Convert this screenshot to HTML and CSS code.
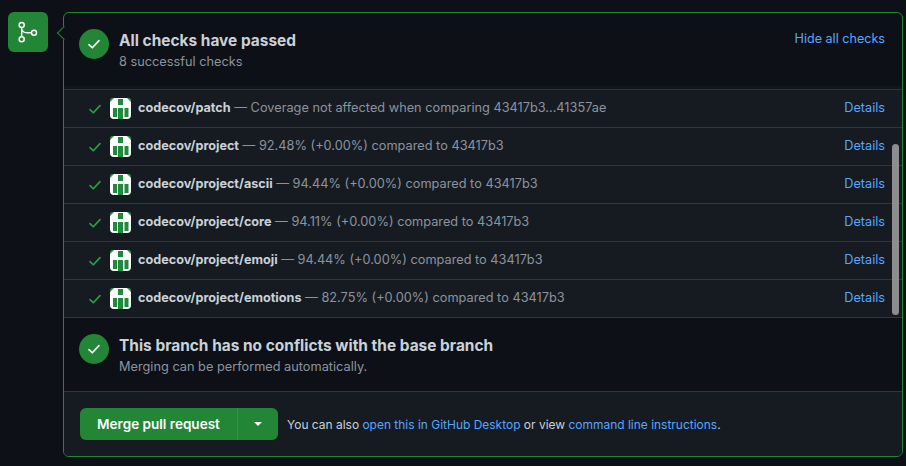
FILE: index.html
```html
<!DOCTYPE html>
<html lang="en">
<head>
<meta charset="utf-8">
<title>Merge checks</title>
<link rel="stylesheet" href="styles.css">
</head>
<body>
<svg class="defs" width="0" height="0" aria-hidden="true">
  <symbol id="check" viewBox="0 0 16 16"><path d="M3 8.6 6.3 11.8 13 4.6" fill="none" stroke="currentColor" stroke-width="1.6" stroke-linecap="round" stroke-linejoin="round"/></symbol>
  <symbol id="codecov" viewBox="0 0 21 21">
    <rect width="21" height="21" rx="4" fill="#fff"/>
    <path d="M0 4V3a3 3 0 0 1 3-3h1zM21 4V3a3 3 0 0 0-3-3h-1z" fill="#1f8a3b"/>
    <path d="M8 1h5v6H8zM3 10h4v9H3zM8 10h5v11H8zM14.500 10h4v9h-4z" fill="#1f8a3b"/>
  </symbol>
</svg>
<main class="page">
  <div class="tile">
    <svg width="24" height="24" viewBox="0 0 24 24" fill="none" stroke="#fff" stroke-width="1.5"><circle cx="5.700" cy="5" r="2.500"/><circle cx="5.700" cy="19.300" r="2.500"/><circle cx="18" cy="12.700" r="2.500"/><path d="M5.700 7.500v9.300M5.700 9c.4 2.400 3 3.700 5.500 3.700h4.300"/></svg>
  </div>
  <section class="box">
    <header class="head">
      <span class="badge"><svg width="16" height="16"><use href="#check"/></svg></span>
      <div class="head-text">
        <h2 class="title">All checks have passed</h2>
        <p class="sub">8 successful checks</p>
      </div>
      <a class="link hide">Hide all checks</a>
    </header>
    <div class="list">
      <div class="row"><svg class="tick" width="16" height="16"><use href="#check"/></svg><svg class="logo" width="21" height="21"><use href="#codecov"/></svg><p class="desc"><b>codecov/patch</b> — Coverage not affected when comparing 43417b3...41357ae</p><a class="link details">Details</a></div>
      <div class="row"><svg class="tick" width="16" height="16"><use href="#check"/></svg><svg class="logo" width="21" height="21"><use href="#codecov"/></svg><p class="desc"><b>codecov/project</b> — 92.48% (+0.00%) compared to 43417b3</p><a class="link details">Details</a></div>
      <div class="row"><svg class="tick" width="16" height="16"><use href="#check"/></svg><svg class="logo" width="21" height="21"><use href="#codecov"/></svg><p class="desc"><b>codecov/project/ascii</b> — 94.44% (+0.00%) compared to 43417b3</p><a class="link details">Details</a></div>
      <div class="row"><svg class="tick" width="16" height="16"><use href="#check"/></svg><svg class="logo" width="21" height="21"><use href="#codecov"/></svg><p class="desc"><b>codecov/project/core</b> — 94.11% (+0.00%) compared to 43417b3</p><a class="link details">Details</a></div>
      <div class="row"><svg class="tick" width="16" height="16"><use href="#check"/></svg><svg class="logo" width="21" height="21"><use href="#codecov"/></svg><p class="desc"><b>codecov/project/emoji</b> — 94.44% (+0.00%) compared to 43417b3</p><a class="link details">Details</a></div>
      <div class="row"><svg class="tick" width="16" height="16"><use href="#check"/></svg><svg class="logo" width="21" height="21"><use href="#codecov"/></svg><p class="desc"><b>codecov/project/emotions</b> — 82.75% (+0.00%) compared to 43417b3</p><a class="link details">Details</a></div>
      <span class="scrollbar"></span>
    </div>
    <div class="status">
      <span class="badge"><svg width="16" height="16"><use href="#check"/></svg></span>
      <div class="head-text">
        <h2 class="title">This branch has no conflicts with the base branch</h2>
        <p class="sub">Merging can be performed automatically.</p>
      </div>
    </div>
    <footer class="foot">
      <div class="merge">
        <span class="merge-main">Merge pull request</span>
        <span class="merge-caret"><i class="caret"></i></span>
      </div>
      <p class="hint">You can also <a class="link">open this in GitHub Desktop</a> or view <a class="link">command line instructions</a>.</p>
    </footer>
  </section>
</main>
</body>
</html>
```
FILE: styles.css
```css
* { box-sizing: border-box; }
html, body { margin: 0; height: 100%; }
body {
  background: #0d1117;
  color: #c9d1d9;
  font-family: Inter, "Liberation Sans", sans-serif;
  font-size: 12px;
  overflow: hidden;
}
.defs { position: absolute; }
.page {
  display: flex;
  align-items: flex-start;
  gap: 15px;
  padding: 12px 3px 0 8px;
}
.tile {
  flex: none;
  width: 40px;
  height: 40px;
  border-radius: 6px;
  background: #238636;
  display: flex;
  align-items: center;
  justify-content: center;
}
.box {
  position: relative;
  flex: 1;
  height: 445px;
  border: 1px solid #238636;
  border-radius: 6px;
  display: flex;
  flex-direction: column;
}
.box::before {
  content: "";
  position: absolute;
  left: -5px;
  top: 15px;
  width: 9px;
  height: 9px;
  background: #0d1117;
  border-left: 1px solid #238636;
  border-bottom: 1px solid #238636;
  transform: rotate(45deg);
}
.head {
  height: 77px;
  flex: none;
  display: flex;
  align-items: flex-start;
  padding: 16px 17px 0 15px;
  gap: 10px;
  border-bottom: 1px solid #2d333b;
  box-shadow: inset 0 -3px 0 #11151c;
}
.badge {
  flex: none;
  width: 30px;
  height: 30px;
  border-radius: 50%;
  background: #238636;
  color: #fff;
  display: flex;
  align-items: center;
  justify-content: center;
}
.head-text { flex: 1; min-width: 0; }
.title {
  margin: 0;
  font-size: 15.45px;
  line-height: 24px;
  font-weight: 700;
  color: #c9d1d9;
}
.sub {
  margin: 0;
  font-size: 12.75px;
  line-height: 18px;
  color: #8b949e;
}
.link { color: #58a6ff; }
.hide { font-size: 12.6px; line-height: 20px; }
.list {
  position: relative;
  flex: none;
  height: 228px;
  background: #161b22;
}
.row {
  height: 38px;
  display: flex;
  align-items: center;
  padding: 0 17px 0 23px;
  border-bottom: 1px solid #30363d;
}
.tick { flex: none; color: #2ea043; margin-right: 7px; }
.logo { flex: none; margin-right: 7px; }
.desc { flex: 1; margin: 0 0 2px; color: #8b949e; font-size: 12.75px; white-space: nowrap; }
.desc b { color: #c9d1d9; font-weight: 700; font-size: 12.65px; }
.details { font-size: 12.7px; margin-bottom: 2px; }
.scrollbar {
  position: absolute;
  right: 3px;
  top: 54px;
  width: 7px;
  height: 171px;
  border-radius: 4px;
  background: #8b8d90;
}
.status {
  flex: none;
  height: 74px;
  display: flex;
  align-items: flex-start;
  padding: 16px 17px 0 15px;
  gap: 10px;
  border-bottom: 1px solid #30363d;
}
.foot {
  flex: 1;
  display: flex;
  align-items: center;
  gap: 9px;
  padding: 0 16px;
  background: #161b22;
  border-radius: 0 0 5px 5px;
}
.merge {
  display: flex;
  height: 32px;
  border-radius: 6px;
  background: #238636;
  color: #fff;
  font-size: 13.55px;
  font-weight: 600;
}
.merge-main {
  width: 157px;
  display: flex;
  align-items: center;
  justify-content: center;
}
.merge-caret {
  width: 41px;
  display: flex;
  align-items: center;
  justify-content: center;
  border-left: 1px solid #3b8f4c;
}
.caret {
  width: 0;
  height: 0;
  border: 4px solid transparent;
  border-top-color: #fff;
  border-bottom: 0;
}
.hint { margin: 0; font-size: 11.97px; color: #c9d1d9; }
```
